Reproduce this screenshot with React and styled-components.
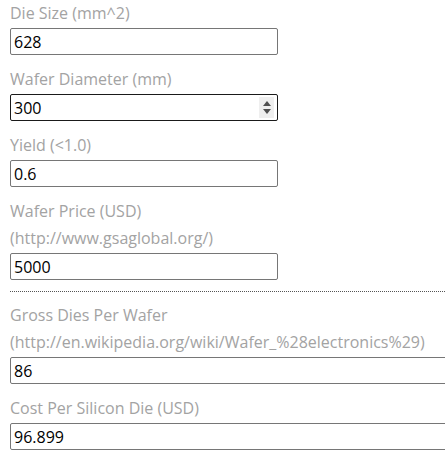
import { createGlobalStyle, styled } from 'styled-components';

const GlobalStyle = createGlobalStyle`
    html, body {
        margin: 0;
        padding: 0;
        background: #fff;
    }
    body {
        font-family: "Open Sans", "Liberation Sans", sans-serif;
        overflow: hidden;
    }
`;

const Page = styled.div`
    width: 445px;
    height: 469px;
    overflow: hidden;
    padding: 0 0 0 10px;
    box-sizing: border-box;
`;

const Section = styled.div`
    width: ${(p) => (p.$wide ? '480px' : '268px')};
    padding-top: ${(p) => (p.$first ? '0' : '10px')};
`;

const Field = styled.div`
    display: flex;
    flex-direction: column;
    margin-bottom: 11px;
`;

const Label = styled.label`
    font-size: 16px;
    line-height: 27px;
    color: #a3a3a3;
    white-space: nowrap;
`;

const InputBox = styled.div`
    display: flex;
    align-items: center;
    margin-top: 1px;
    height: 27px;
    box-sizing: border-box;
    border: 1px solid ${(p) => (p.$hover ? '#1a1a1a' : '#767676')};
    border-radius: 2px;
    padding: 0 3px 0 3px;
    background: #fff;
`;

const Input = styled.input`
    flex: 1;
    min-width: 0;
    border: none;
    outline: none;
    padding: 0;
    font-family: "Open Sans", "Liberation Sans", sans-serif;
    font-size: 16px;
    color: #000;
    background: transparent;
`;

const Spinner = styled.div`
    width: 15px;
    height: 21px;
    background: #efefef;
    display: flex;
    flex-direction: column;
    align-items: center;
    justify-content: center;
    gap: 3px;
`;

const Arrow = styled.div`
    width: 0;
    height: 0;
    border-left: 4px solid transparent;
    border-right: 4px solid transparent;
    ${(p) =>
        p.$up
            ? 'border-bottom: 5px solid #505050;'
            : 'border-top: 5px solid #505050;'}
`;

const Divider = styled.hr`
    margin: 0;
    border: none;
    border-top: 1px dotted #555;
`;

function InputField({ lines, value, spinner }) {
    return (
        <Field>
            {lines.map((line) => (
                <Label key={line}>{line}</Label>
            ))}
            <InputBox $hover={spinner}>
                <Input defaultValue={value} />
                {spinner && (
                    <Spinner>
                        <Arrow $up />
                        <Arrow />
                    </Spinner>
                )}
            </InputBox>
        </Field>
    );
}

export default function App() {
    return (
        <>
            <GlobalStyle />
            <Page>
                <Section $first>
                    <InputField lines={['Die Size (mm^2)']} value="628" />
                    <InputField lines={['Wafer Diameter (mm)']} value="300" spinner />
                    <InputField lines={['Yield (<1.0)']} value="0.6" />
                    <InputField
                        lines={['Wafer Price (USD)', '(http://www.gsaglobal.org/)']}
                        value="5000"
                    />
                </Section>
                <Divider />
                <Section $wide>
                    <InputField
                        lines={[
                            'Gross Dies Per Wafer',
                            '(http://en.wikipedia.org/wiki/Wafer_%28electronics%29)',
                        ]}
                        value="86"
                    />
                    <InputField lines={['Cost Per Silicon Die (USD)']} value="96.899" />
                </Section>
            </Page>
        </>
    );
}
